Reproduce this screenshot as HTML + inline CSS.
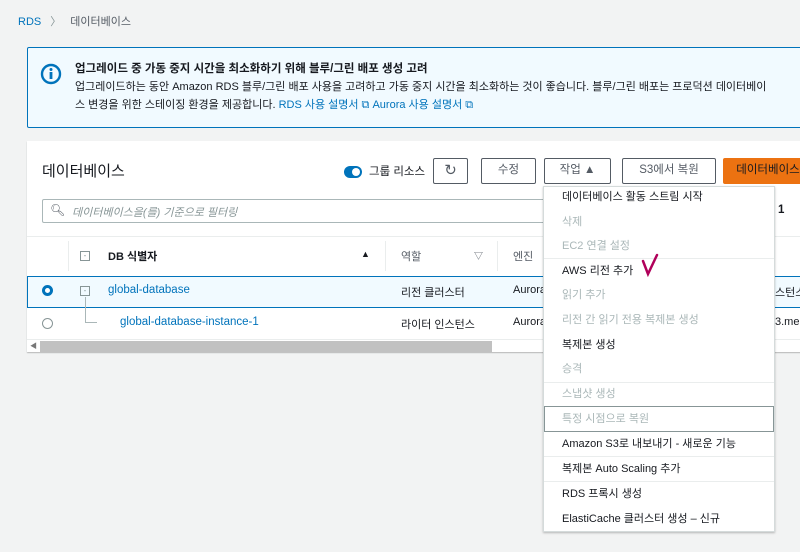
<!DOCTYPE html><html><head><meta charset="utf-8"><style>
*{box-sizing:border-box;margin:0;padding:0}
body{width:800px;height:552px;overflow:hidden;background:#f2f3f3;font-family:"Liberation Sans","Noto Sans CJK KR",sans-serif;font-size:11.5px;color:#16191f;position:relative}
.a{position:absolute;white-space:nowrap}
.link{color:#0073bb}
.btn{position:absolute;top:158px;height:26px;border:1px solid #545b64;background:#fff;border-radius:2px;text-align:center;line-height:23px;color:#545b64;font-size:11.5px}
.mi{position:absolute;left:18px;font-size:11px}
.dis{color:#aab7b8}
.ln{position:absolute;left:0;right:0;height:1px;background:#eaeded}
</style></head><body>
<div class="a" style="left:18px;top:13px;font-size:11px"><span class="link">RDS</span><span style="color:#879596;margin:0 9px">〉</span><span style="color:#545b64">데이터베이스</span></div>
<div class="a" style="left:27px;top:47px;width:790px;height:81px;background:#f1faff;border:1px solid #0073bb;border-radius:2px"></div>
<svg class="a" style="left:40px;top:63px" width="22" height="22"><circle cx="11" cy="11" r="9" fill="none" stroke="#0073bb" stroke-width="2.4"/><circle cx="11" cy="6.5" r="1.5" fill="#0073bb"/><rect x="9.6" y="9" width="2.8" height="7" fill="#0073bb"/></svg>
<div class="a" style="left:75px;top:60px;font-weight:bold;font-size:11.5px">업그레이드 중 가동 중지 시간을 최소화하기 위해 블루/그린 배포 생성 고려</div>
<div class="a" style="left:75px;top:78px;font-size:11px">업그레이드하는 동안 Amazon RDS 블루/그린 배포 사용을 고려하고 가동 중지 시간을 최소화하는 것이 좋습니다. 블루/그린 배포는 프로덕션 데이터베이</div>
<div class="a" style="left:75px;top:96px;font-size:11px">스 변경을 위한 스테이징 환경을 제공합니다. <span class="link">RDS 사용 설명서 ⧉ Aurora 사용 설명서 ⧉</span></div>
<div class="a" style="left:27px;top:141px;width:790px;height:211px;background:#fff;box-shadow:0 1px 1px rgba(0,0,0,.25)"></div>
<div class="a" style="left:42px;top:160px;font-size:15px">데이터베이스</div>
<div class="a" style="left:344px;top:166px;width:18px;height:12px;border-radius:6px;background:#0073bb"><div style="position:absolute;right:2px;top:2px;width:8px;height:8px;border-radius:50%;background:#fff"></div></div>
<div class="a" style="left:369px;top:163px;font-size:11.5px">그룹 리소스</div>
<div class="btn" style="left:433px;width:35px;font-size:15px">↻</div>
<div class="btn" style="left:481px;width:55px">수정</div>
<div class="btn" style="left:544px;width:67px">작업 ▲</div>
<div class="btn" style="left:622px;width:94px">S3에서 복원</div>
<div class="btn" style="left:723px;width:90px;background:#ec7211;border-color:#ec7211;color:#16191f">데이터베이스</div>
<div class="a" style="left:42px;top:199px;width:520px;height:24px;border:1px solid #aab7b8;border-radius:2px"></div>
<div class="a" style="left:50px;top:203px;color:#545b64;font-size:12px">🔍︎</div>
<div class="a" style="left:72px;top:204px;color:#879596;font-style:italic;font-size:11px">데이터베이스을(를) 기준으로 필터링</div>
<div class="a" style="left:778px;top:204px;font-weight:bold">1</div>
<div class="a" style="left:27px;top:236px;width:790px;height:1px;background:#eaeded"></div>
<div class="a" style="left:80px;top:251px;width:10px;height:10px;border:1px solid #879596;font-size:8px;line-height:7px;text-align:center;color:#879596">-</div>
<div class="a" style="left:108px;top:248px;font-weight:bold;font-size:11px">DB 식별자</div>
<div class="a" style="left:361px;top:249px;font-size:9px">▲</div>
<div class="a" style="left:68px;top:241px;width:1px;height:30px;background:#eaeded"></div>
<div class="a" style="left:385px;top:241px;width:1px;height:30px;background:#eaeded"></div>
<div class="a" style="left:401px;top:248px;font-size:11px;color:#545b64">역할</div>
<div class="a" style="left:474px;top:249px;font-size:9px;color:#545b64">▽</div>
<div class="a" style="left:497px;top:241px;width:1px;height:30px;background:#eaeded"></div>
<div class="a" style="left:513px;top:248px;font-size:11px;color:#545b64">엔진</div>
<div class="a" style="left:27px;top:276px;width:790px;height:32px;background:#f1faff;border:1px solid #0073bb"></div>
<div class="a" style="left:42px;top:285px;width:11px;height:11px;border-radius:50%;border:3.5px solid #0073bb;background:#fff"></div>
<div class="a" style="left:80px;top:286px;width:10px;height:10px;border:1px solid #879596;font-size:8px;line-height:7px;text-align:center;color:#879596">-</div>
<div class="a" style="left:85px;top:297px;width:1px;height:25px;background:#aab7b8"></div>
<div class="a" style="left:85px;top:322px;width:12px;height:1px;background:#aab7b8"></div>
<div class="a link" style="left:108px;top:284px;font-size:11.5px">global-database</div>
<div class="a" style="left:401px;top:284px;font-size:11px">리전 클러스터</div>
<div class="a" style="left:513px;top:284px;font-size:11px">Aurora</div>
<div class="a" style="left:775px;top:284px;font-size:11px">스턴스</div>
<div class="a" style="left:42px;top:318px;width:11px;height:11px;border-radius:50%;border:1px solid #879596"></div>
<div class="a link" style="left:120px;top:316px;font-size:11.5px">global-database-instance-1</div>
<div class="a" style="left:401px;top:316px;font-size:11px">라이터 인스턴스</div>
<div class="a" style="left:513px;top:316px;font-size:11px">Aurora</div>
<div class="a" style="left:775px;top:316px;font-size:11px">3.me</div>
<div class="a" style="left:27px;top:339px;width:790px;height:1px;background:#eaeded"></div>
<div class="a" style="left:40px;top:341px;width:452px;height:11px;background:#c1c1c1"></div>
<div class="a" style="left:30px;top:341px;font-size:7px;color:#777">◀</div>
<div class="a" style="left:543px;top:186px;width:232px;height:346px;background:#fff;border:1px solid #d5dbdb;box-shadow:0 1px 2px rgba(0,0,0,.25)">
<div class="mi" style="top:1px">데이터베이스 활동 스트림 시작</div>
<div class="mi dis" style="top:26px">삭제</div>
<div class="mi dis" style="top:50px">EC2 연결 설정</div>
<div class="ln" style="top:71px"></div>
<div class="mi" style="top:75px">AWS 리전 추가</div>
<div class="mi dis" style="top:99px">읽기 추가</div>
<div class="mi dis" style="top:124px">리전 간 읽기 전용 복제본 생성</div>
<div class="mi" style="top:149px">복제본 생성</div>
<div class="mi dis" style="top:173px">승격</div>
<div class="ln" style="top:195px"></div>
<div class="mi dis" style="top:198px">스냅샷 생성</div>
<div style="position:absolute;left:0;right:0;top:219px;height:26px;border:1px solid #879596"></div>
<div class="mi dis" style="top:223px">특정 시점으로 복원</div>
<div class="mi" style="top:248px">Amazon S3로 내보내기 - 새로운 기능</div>
<div class="ln" style="top:269px"></div>
<div class="mi" style="top:273px">복제본 Auto Scaling 추가</div>
<div class="ln" style="top:294px"></div>
<div class="mi" style="top:298px">RDS 프록시 생성</div>
<div class="mi" style="top:323px">ElastiCache 클러스터 생성 – 신규</div>
</div>
<svg class="a" style="left:640px;top:253px" width="22" height="24"><path d="M3 8 L8 21 L17 2" fill="none" stroke="#b0005a" stroke-width="2.5" stroke-linecap="round"/></svg>
</body></html>
